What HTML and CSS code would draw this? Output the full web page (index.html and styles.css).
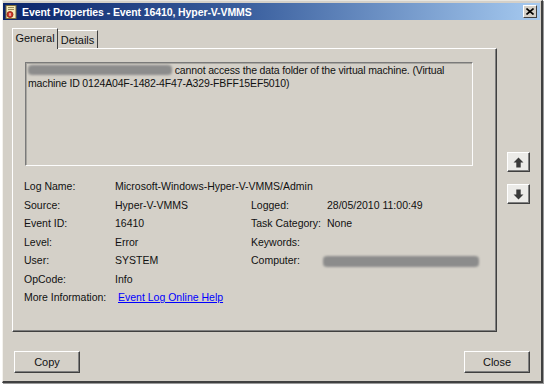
FILE: index.html
```html
<!DOCTYPE html>
<html>
<head>
<meta charset="utf-8">
<link rel="stylesheet" href="styles.css">
</head>
<body>
<div class="window">
  <div class="titlebar">
    <svg class="ticon" width="12" height="14" viewBox="0 0 12 14">
      <rect x="1" y="0.5" width="10" height="13" fill="#f4e9b8" stroke="#7a6a3a" stroke-width="1"/>
      <rect x="3" y="2" width="6" height="1" fill="#9a8a5a"/>
      <rect x="3" y="4" width="6" height="1" fill="#9a8a5a"/>
      <circle cx="5" cy="9.5" r="3" fill="#d23a2a" stroke="#8a1a10" stroke-width="0.8"/>
      <rect x="4.5" y="8" width="1" height="3" fill="#fff"/>
    </svg>
    <span class="ttext">Event Properties - Event 16410, Hyper-V-VMMS</span>
    <span class="tclose">
      <svg width="8" height="7" viewBox="0 0 8 7"><path d="M0.5 0.5 L7.5 6.5 M7.5 0.5 L0.5 6.5" stroke="#000" stroke-width="1.6"/></svg>
    </span>
  </div>
  <div class="main">
    <div class="tabcol">
      <div class="tabs">
        <div class="tab active">General</div>
        <div class="tab">Details</div>
      </div>
      <div class="panel">
        <div class="msgbox">
          <span class="redact r1"></span> cannot access the data folder of the virtual machine. (Virtual machine ID 0124A04F-1482-4F47-A329-FBFF15EF5010)
        </div>
        <div class="fields">
          <div>Log Name:</div><div class="span3">Microsoft-Windows-Hyper-V-VMMS/Admin</div>
          <div>Source:</div><div>Hyper-V-VMMS</div><div>Logged:</div><div>28/05/2010 11:00:49</div>
          <div>Event ID:</div><div>16410</div><div>Task Category:</div><div>None</div>
          <div>Level:</div><div>Error</div><div>Keywords:</div><div></div>
          <div>User:</div><div>SYSTEM</div><div>Computer:</div><div><span class="redact r2"></span></div>
          <div>OpCode:</div><div class="span3">Info</div>
          <div>More Information:</div><div class="span3"><a class="link" href="#">Event Log Online Help</a></div>
        </div>
      </div>
    </div>
    <div class="arrows">
      <div class="abtn">
        <svg width="11" height="11" viewBox="0 0 10 10"><path d="M5 0.5 L9.5 5 L7 5 L7 9.5 L3 9.5 L3 5 L0.5 5 Z" fill="#3a3a3a"/></svg>
      </div>
      <div class="abtn">
        <svg width="11" height="11" viewBox="0 0 10 10"><path d="M5 9.5 L9.5 5 L7 5 L7 0.5 L3 0.5 L3 5 L0.5 5 Z" fill="#3a3a3a"/></svg>
      </div>
    </div>
  </div>
  <div class="footer">
    <div class="btn">Copy</div>
    <div class="btn">Close</div>
  </div>
</div>
</body>
</html>
```
FILE: styles.css
```css
html, body {
  margin: 0;
  padding: 0;
  background: #ffffff;
}
body {
  width: 548px;
  height: 388px;
  overflow: hidden;
  font-family: "Liberation Sans", Arial, sans-serif;
  font-size: 10.5px;
  color: #111;
}
.window {
  box-sizing: border-box;
  margin-left: 2px;
  width: 541px;
  height: 383px;
  background: #d4d0c8;
  border-left: 1px solid #f4f2ee;
  border-top: 1px solid #e8e6e0;
  border-right: 2px solid #404040;
  border-bottom: 2px solid #404040;
  padding: 2px 1px 0 0;
  box-shadow: 1px 1px 0 #9a9a9a;
}
.titlebar {
  height: 17px;
  background: linear-gradient(to right, #0a246a 0%, #3a5f9e 45%, #a6caf0 100%);
  display: flex;
  align-items: center;
  padding-left: 2px;
}
.ticon {
  flex: none;
  margin-right: 5px;
}
.ttext {
  color: #fff;
  font-weight: bold;
  font-size: 10.5px;
  letter-spacing: -0.1px;
  flex: 1;
}
.tclose {
  box-sizing: border-box;
  width: 14px;
  height: 13px;
  margin-right: 3px;
  background: #d4d0c8;
  border-top: 1px solid #fff;
  border-left: 1px solid #fff;
  border-right: 1px solid #404040;
  border-bottom: 1px solid #404040;
  display: flex;
  align-items: center;
  justify-content: center;
}
.main {
  display: flex;
  padding: 8px 0 0 9px;
}
.tabcol {
  width: 485px;
  display: flex;
  flex-direction: column;
}
.tabs {
  display: flex;
  align-items: flex-end;
  height: 20px;
  position: relative;
  z-index: 1;
}
.tab {
  box-sizing: border-box;
  height: 18px;
  padding: 0 4px;
  border-top: 1px solid #fff;
  border-left: 1px solid #fff;
  border-right: 1px solid #404040;
  display: flex;
  align-items: center;
  justify-content: center;
  background: #d4d0c8;
  font-size: 11px;
}
.tab.active {
  height: 21px;
  width: 46px;
  margin-bottom: -1px;
  padding-bottom: 3px;
}
.tab:not(.active) {
  width: 40px;
  border-left: none;
}
.panel {
  box-sizing: border-box;
  height: 284px;
  border-top: 1px solid #fff;
  border-left: 1px solid #fff;
  border-right: 1px solid #404040;
  border-bottom: 1px solid #404040;
  box-shadow: inset -1px -1px 0 #808080;
  padding: 13px 0 0 11px;
}
.msgbox {
  box-sizing: border-box;
  margin-left: 1px;
  width: 448px;
  height: 104px;
  border-top: 1px solid #7a7a7a;
  border-left: 1px solid #7a7a7a;
  border-right: 1px solid #fcfcfc;
  border-bottom: 1px solid #fcfcfc;
  box-shadow: inset 1px 1px 0 #a8a6a0;
  padding: 1px 1px 0 2px;
  line-height: 13px;
  letter-spacing: -0.15px;
}
.redact {
  display: inline-block;
  background: #8c8c8c;
  border-radius: 4px;
  filter: blur(0.8px);
  vertical-align: middle;
}
.r1 {
  width: 144px;
  height: 10px;
  margin-top: -2px;
}
.r2 {
  width: 156px;
  height: 11px;
  margin-left: -4px;
}
.fields {
  margin-top: 11px;
  display: grid;
  grid-template-columns: 91px 136px 76px 1fr;
  grid-auto-rows: 18.5px;
  align-items: center;
}
.span3 {
  grid-column: span 3;
}
.link {
  color: #0000ff;
  text-decoration: underline;
  margin-left: 3px;
}
.arrows {
  margin-left: 10px;
  padding-top: 124px;
  display: flex;
  flex-direction: column;
  gap: 12px;
}
.abtn {
  box-sizing: border-box;
  width: 23px;
  height: 20px;
  background: #ecebe8;
  border-top: 1px solid #fff;
  border-left: 1px solid #fff;
  border-right: 1px solid #404040;
  border-bottom: 1px solid #404040;
  box-shadow: inset -1px -1px 0 #808080;
  display: flex;
  align-items: center;
  justify-content: center;
}
.footer {
  display: flex;
  justify-content: space-between;
  padding: 19px 10px 0 11px;
}
.btn {
  box-sizing: border-box;
  width: 66px;
  height: 22px;
  border-top: 1px solid #fff;
  border-left: 1px solid #fff;
  border-right: 1px solid #404040;
  border-bottom: 1px solid #404040;
  box-shadow: inset -1px -1px 0 #808080;
  display: flex;
  align-items: center;
  justify-content: center;
  font-size: 11px;
}
```
